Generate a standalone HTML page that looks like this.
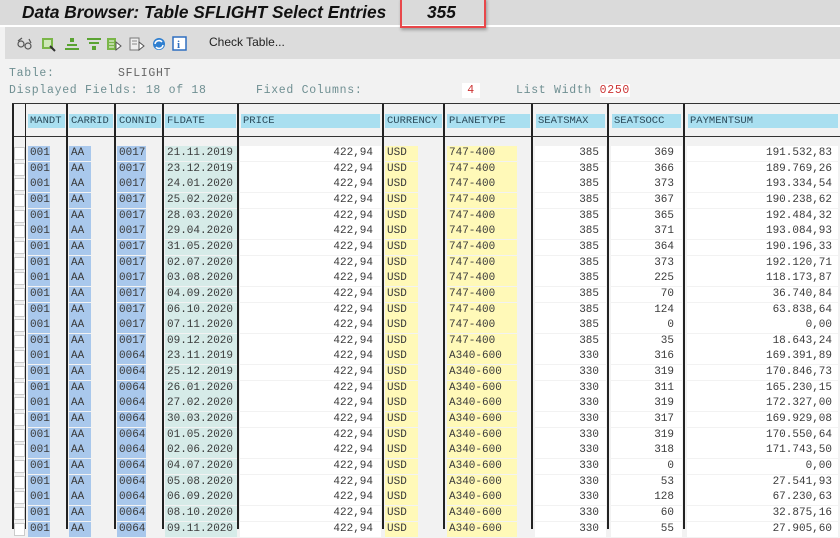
<!DOCTYPE html>
<html><head><meta charset="utf-8"><style>
*{margin:0;padding:0;box-sizing:border-box}
body{width:840px;height:529px;overflow:hidden;background:#f2f2f2;position:relative;font-family:"Liberation Mono",monospace;font-size:11px;color:#3a3a3a}
.a{position:absolute}
#title{left:0;top:0;width:840px;height:25px;background:#dadada}
#title span{position:absolute;left:22px;top:2px;font:italic bold 17.3px "Liberation Sans",sans-serif;color:#111}
#wl{left:0;top:25px;width:840px;height:2px;background:#fff}
#tb{left:5px;top:27px;width:835px;height:32px;background:#dcdcdc}
#redbox{left:400px;top:-2px;width:86px;height:30px;border:2px solid #e8474a;box-shadow:1px 2px 3px rgba(0,0,0,.3)}
.info{font-size:11.5px;color:#6f8f92;letter-spacing:.7px}
.vl{position:absolute;top:104px;width:1.5px;height:425px;background:#222}
.hl{position:absolute;left:12px;width:828px;height:1px;background:#333}
.hb{position:absolute;top:114px;height:14px;background:#a9dff0;color:#2a4a5a;font-size:10.5px;padding-left:2px;line-height:14px}
.r{position:absolute;left:0;width:840px;height:16px}
.r div{position:absolute;top:0;height:15px;line-height:15px}
.cb{left:14px;width:11px;background:#fff;border:1px solid #ccc;height:13px!important;top:1px!important}
.m{left:28px;width:22px;background:#a9c8ec;padding-left:2px}
.c{left:69px;width:22px;background:#a9c8ec;padding-left:2px}
.n{left:117px;width:29px;background:#a9c8ec;padding-left:2px}
.d{left:165px;width:72px;background:#d6ebe8;padding-left:2px}
.p{left:240px;width:141px;background:#fff;text-align:right;padding-right:8px}
.u{left:385px;width:33px;background:#fff9b8;padding-left:2px}
.t{left:447px;width:70px;background:#fff9b8;padding-left:2px}
.x{left:535px;width:71px;background:#fff;text-align:right;padding-right:7px}
.o{left:611px;width:71px;background:#fff;text-align:right;padding-right:8px}
.s{left:687px;width:151px;background:#fff;text-align:right;padding-right:6px}
</style></head><body>
<div class="a" id="title"><span>Data Browser: Table SFLIGHT Select Entries</span><span style="left:427px">355</span></div>
<div class="a" id="wl"></div>
<div class="a" id="tb">
<svg class="a" style="left:11px;top:8px" width="240" height="18" viewBox="0 0 240 18">
<g fill="none" stroke="#555" stroke-width="1.2"><circle cx="5" cy="9" r="3"/><circle cx="12" cy="11" r="3"/><path d="M2 6 L6 3 M15 8 L13 4"/></g>
<rect x="26" y="3" width="11" height="11" fill="#7ab648"/><rect x="28" y="5" width="7" height="7" fill="#cfe8b8"/><path d="M34 11 L39 16" stroke="#333" stroke-width="2"/>
<path d="M54 3h4v4h-4z M51 9h10v2h-10z M49 13h14v2h-14z" fill="#5aa332"/>
<path d="M71 3h14v2h-14z M73 7h10v2h-10z M76 11h4v4h-4z" fill="#5aa332"/>
<rect x="91" y="3" width="9" height="12" fill="#7ab648"/><path d="M93 6h5M93 9h5M93 12h5" stroke="#fff"/><path d="M100 7 L105 11 L100 15z" fill="#fff" stroke="#555"/>
<rect x="114" y="3" width="9" height="12" fill="#eee" stroke="#777"/><path d="M116 6h5M116 9h5" stroke="#888"/><path d="M123 7 L128 11 L123 15z" fill="#fff" stroke="#555"/>
<circle cx="143" cy="9" r="6" fill="#2f7fd0"/><path d="M139 9a4 4 0 0 1 7-2 M147 10a4 4 0 0 1-7 2" stroke="#fff" stroke-width="1.5" fill="none"/>
<rect x="157" y="2" width="13" height="13" fill="#fff" stroke="#2f6fc0" stroke-width="1.5"/><text x="161" y="13" font-family="Liberation Serif" font-weight="bold" font-size="11" fill="#2f6fc0">i</text>
</svg>
<span class="a" style="left:204px;top:8px;font:12px 'Liberation Sans',sans-serif;color:#222">Check Table...</span>
</div>
<div class="a" id="redbox"></div>
<div class="a info" style="left:9px;top:67px">Table:</div>
<div class="a info" style="left:118px;top:67px;color:#666">SFLIGHT</div>
<div class="a info" style="left:9px;top:84px">Displayed Fields: 18 of  18</div>
<div class="a info" style="left:256px;top:84px">Fixed Columns:</div>
<div class="a info" style="left:462px;top:83px;width:18px;height:15px;background:#fff;color:#c33;text-align:center;line-height:15px">4</div>
<div class="a info" style="left:516px;top:84px">List Width <span style="color:#c33;background:#fff">0250</span></div>

<div class="hl" style="top:103px"></div>
<div class="hl" style="top:136px"></div>
<div class="vl" style="left:12px"></div><div class="vl" style="left:25px;width:1px"></div>
<div class="vl" style="left:66px"></div><div class="vl" style="left:114px"></div><div class="vl" style="left:162px"></div>
<div class="vl" style="left:237px"></div><div class="vl" style="left:382px"></div><div class="vl" style="left:443px"></div>
<div class="vl" style="left:531px"></div><div class="vl" style="left:607px"></div><div class="vl" style="left:683px"></div>

<div class="hb" style="left:28px;width:37px">MANDT</div>
<div class="hb" style="left:69px;width:44px">CARRID</div>
<div class="hb" style="left:117px;width:44px">CONNID</div>
<div class="hb" style="left:165px;width:71px">FLDATE</div>
<div class="hb" style="left:241px;width:139px">PRICE</div>
<div class="hb" style="left:385px;width:57px">CURRENCY</div>
<div class="hb" style="left:447px;width:83px">PLANETYPE</div>
<div class="hb" style="left:536px;width:69px">SEATSMAX</div>
<div class="hb" style="left:612px;width:69px">SEATSOCC</div>
<div class="hb" style="left:688px;width:150px">PAYMENTSUM</div>

<div class="r" style="top:146px"><div class="cb"></div><div class="m">001</div><div class="c">AA</div><div class="n">0017</div><div class="d">21.11.2019</div><div class="p">422,94</div><div class="u">USD</div><div class="t">747-400</div><div class="x">385</div><div class="o">369</div><div class="s">191.532,83</div></div>
<div class="r" style="top:161.65px"><div class="cb"></div><div class="m">001</div><div class="c">AA</div><div class="n">0017</div><div class="d">23.12.2019</div><div class="p">422,94</div><div class="u">USD</div><div class="t">747-400</div><div class="x">385</div><div class="o">366</div><div class="s">189.769,26</div></div>
<div class="r" style="top:177.3px"><div class="cb"></div><div class="m">001</div><div class="c">AA</div><div class="n">0017</div><div class="d">24.01.2020</div><div class="p">422,94</div><div class="u">USD</div><div class="t">747-400</div><div class="x">385</div><div class="o">373</div><div class="s">193.334,54</div></div>
<div class="r" style="top:192.95px"><div class="cb"></div><div class="m">001</div><div class="c">AA</div><div class="n">0017</div><div class="d">25.02.2020</div><div class="p">422,94</div><div class="u">USD</div><div class="t">747-400</div><div class="x">385</div><div class="o">367</div><div class="s">190.238,62</div></div>
<div class="r" style="top:208.6px"><div class="cb"></div><div class="m">001</div><div class="c">AA</div><div class="n">0017</div><div class="d">28.03.2020</div><div class="p">422,94</div><div class="u">USD</div><div class="t">747-400</div><div class="x">385</div><div class="o">365</div><div class="s">192.484,32</div></div>
<div class="r" style="top:224.25px"><div class="cb"></div><div class="m">001</div><div class="c">AA</div><div class="n">0017</div><div class="d">29.04.2020</div><div class="p">422,94</div><div class="u">USD</div><div class="t">747-400</div><div class="x">385</div><div class="o">371</div><div class="s">193.084,93</div></div>
<div class="r" style="top:239.9px"><div class="cb"></div><div class="m">001</div><div class="c">AA</div><div class="n">0017</div><div class="d">31.05.2020</div><div class="p">422,94</div><div class="u">USD</div><div class="t">747-400</div><div class="x">385</div><div class="o">364</div><div class="s">190.196,33</div></div>
<div class="r" style="top:255.55px"><div class="cb"></div><div class="m">001</div><div class="c">AA</div><div class="n">0017</div><div class="d">02.07.2020</div><div class="p">422,94</div><div class="u">USD</div><div class="t">747-400</div><div class="x">385</div><div class="o">373</div><div class="s">192.120,71</div></div>
<div class="r" style="top:271.2px"><div class="cb"></div><div class="m">001</div><div class="c">AA</div><div class="n">0017</div><div class="d">03.08.2020</div><div class="p">422,94</div><div class="u">USD</div><div class="t">747-400</div><div class="x">385</div><div class="o">225</div><div class="s">118.173,87</div></div>
<div class="r" style="top:286.85px"><div class="cb"></div><div class="m">001</div><div class="c">AA</div><div class="n">0017</div><div class="d">04.09.2020</div><div class="p">422,94</div><div class="u">USD</div><div class="t">747-400</div><div class="x">385</div><div class="o">70</div><div class="s">36.740,84</div></div>
<div class="r" style="top:302.5px"><div class="cb"></div><div class="m">001</div><div class="c">AA</div><div class="n">0017</div><div class="d">06.10.2020</div><div class="p">422,94</div><div class="u">USD</div><div class="t">747-400</div><div class="x">385</div><div class="o">124</div><div class="s">63.838,64</div></div>
<div class="r" style="top:318.15px"><div class="cb"></div><div class="m">001</div><div class="c">AA</div><div class="n">0017</div><div class="d">07.11.2020</div><div class="p">422,94</div><div class="u">USD</div><div class="t">747-400</div><div class="x">385</div><div class="o">0</div><div class="s">0,00</div></div>
<div class="r" style="top:333.8px"><div class="cb"></div><div class="m">001</div><div class="c">AA</div><div class="n">0017</div><div class="d">09.12.2020</div><div class="p">422,94</div><div class="u">USD</div><div class="t">747-400</div><div class="x">385</div><div class="o">35</div><div class="s">18.643,24</div></div>
<div class="r" style="top:349.45px"><div class="cb"></div><div class="m">001</div><div class="c">AA</div><div class="n">0064</div><div class="d">23.11.2019</div><div class="p">422,94</div><div class="u">USD</div><div class="t">A340-600</div><div class="x">330</div><div class="o">316</div><div class="s">169.391,89</div></div>
<div class="r" style="top:365.1px"><div class="cb"></div><div class="m">001</div><div class="c">AA</div><div class="n">0064</div><div class="d">25.12.2019</div><div class="p">422,94</div><div class="u">USD</div><div class="t">A340-600</div><div class="x">330</div><div class="o">319</div><div class="s">170.846,73</div></div>
<div class="r" style="top:380.75px"><div class="cb"></div><div class="m">001</div><div class="c">AA</div><div class="n">0064</div><div class="d">26.01.2020</div><div class="p">422,94</div><div class="u">USD</div><div class="t">A340-600</div><div class="x">330</div><div class="o">311</div><div class="s">165.230,15</div></div>
<div class="r" style="top:396.4px"><div class="cb"></div><div class="m">001</div><div class="c">AA</div><div class="n">0064</div><div class="d">27.02.2020</div><div class="p">422,94</div><div class="u">USD</div><div class="t">A340-600</div><div class="x">330</div><div class="o">319</div><div class="s">172.327,00</div></div>
<div class="r" style="top:412.05px"><div class="cb"></div><div class="m">001</div><div class="c">AA</div><div class="n">0064</div><div class="d">30.03.2020</div><div class="p">422,94</div><div class="u">USD</div><div class="t">A340-600</div><div class="x">330</div><div class="o">317</div><div class="s">169.929,08</div></div>
<div class="r" style="top:427.7px"><div class="cb"></div><div class="m">001</div><div class="c">AA</div><div class="n">0064</div><div class="d">01.05.2020</div><div class="p">422,94</div><div class="u">USD</div><div class="t">A340-600</div><div class="x">330</div><div class="o">319</div><div class="s">170.550,64</div></div>
<div class="r" style="top:443.35px"><div class="cb"></div><div class="m">001</div><div class="c">AA</div><div class="n">0064</div><div class="d">02.06.2020</div><div class="p">422,94</div><div class="u">USD</div><div class="t">A340-600</div><div class="x">330</div><div class="o">318</div><div class="s">171.743,50</div></div>
<div class="r" style="top:459px"><div class="cb"></div><div class="m">001</div><div class="c">AA</div><div class="n">0064</div><div class="d">04.07.2020</div><div class="p">422,94</div><div class="u">USD</div><div class="t">A340-600</div><div class="x">330</div><div class="o">0</div><div class="s">0,00</div></div>
<div class="r" style="top:474.65px"><div class="cb"></div><div class="m">001</div><div class="c">AA</div><div class="n">0064</div><div class="d">05.08.2020</div><div class="p">422,94</div><div class="u">USD</div><div class="t">A340-600</div><div class="x">330</div><div class="o">53</div><div class="s">27.541,93</div></div>
<div class="r" style="top:490.3px"><div class="cb"></div><div class="m">001</div><div class="c">AA</div><div class="n">0064</div><div class="d">06.09.2020</div><div class="p">422,94</div><div class="u">USD</div><div class="t">A340-600</div><div class="x">330</div><div class="o">128</div><div class="s">67.230,63</div></div>
<div class="r" style="top:505.95px"><div class="cb"></div><div class="m">001</div><div class="c">AA</div><div class="n">0064</div><div class="d">08.10.2020</div><div class="p">422,94</div><div class="u">USD</div><div class="t">A340-600</div><div class="x">330</div><div class="o">60</div><div class="s">32.875,16</div></div>
<div class="r" style="top:521.6px"><div class="cb"></div><div class="m">001</div><div class="c">AA</div><div class="n">0064</div><div class="d">09.11.2020</div><div class="p">422,94</div><div class="u">USD</div><div class="t">A340-600</div><div class="x">330</div><div class="o">55</div><div class="s">27.905,60</div></div>
</body></html>
